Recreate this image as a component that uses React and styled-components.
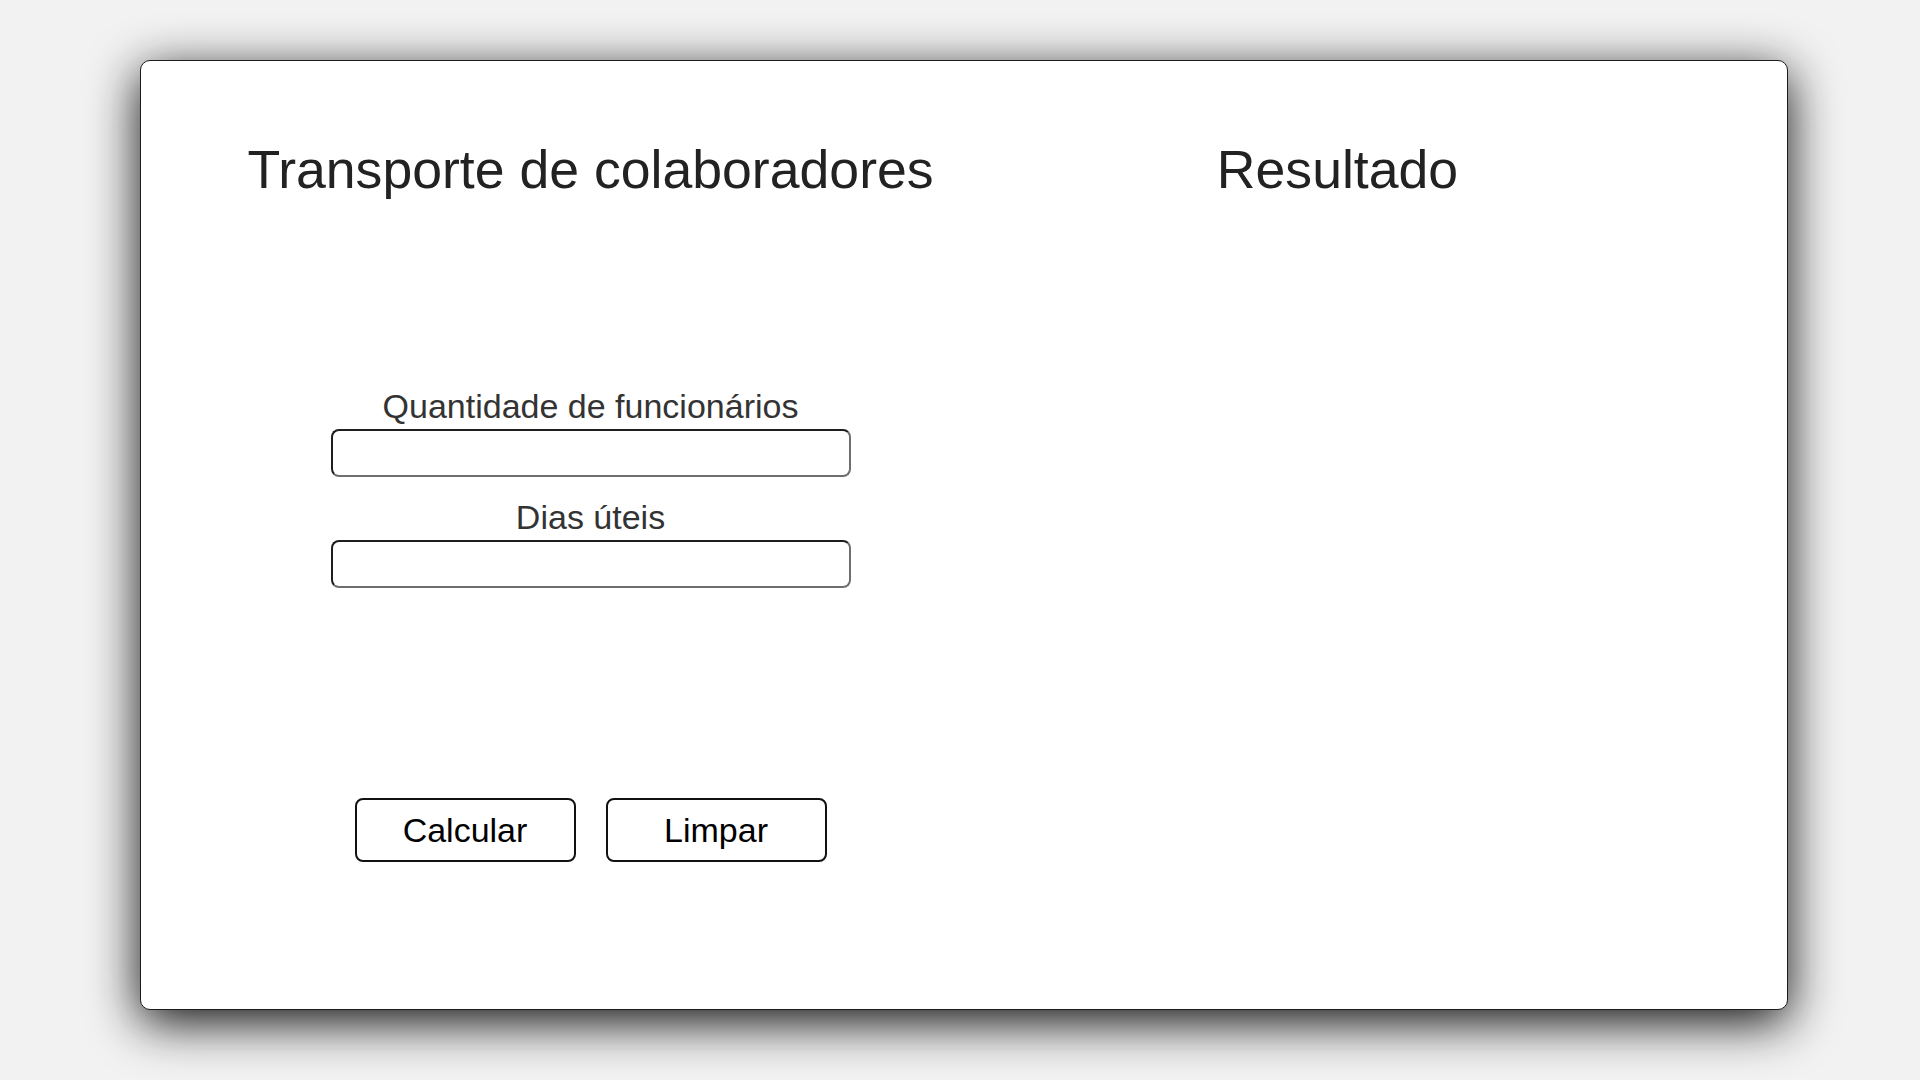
import React from 'react';
import styled, { createGlobalStyle } from 'styled-components';

const GlobalStyle = createGlobalStyle`
  body {
    margin: 0;
    background-color: #f2f2f2;
    font-family: "Liberation Sans", Arial, sans-serif;
  }
`;

const Page = styled.div`
  box-sizing: border-box;
  min-height: 100vh;
  padding: 60px 132px 70px 140px;
`;

const Card = styled.div`
  box-sizing: border-box;
  width: 1648px;
  height: 950px;
  display: grid;
  grid-template-columns: 1fr 1fr;
  padding: 77px 76px 0;
  background-color: #fff;
  border: 1px solid #1c1c1c;
  border-radius: 10px;
  box-shadow: 0 12px 50px rgba(0, 0, 0, 0.95);
`;

const Column = styled.div`
  display: flex;
  flex-direction: column;
  align-items: center;
`;

const Title = styled.h1`
  margin: 0;
  font-size: 53.6px;
  font-weight: 400;
  line-height: 62px;
  color: #222;
`;

const Form = styled.form`
  width: 520px;
  margin-top: 187px;
  display: flex;
  flex-direction: column;
  gap: 21px;
`;

const Field = styled.div`
  display: flex;
  flex-direction: column;
`;

const Label = styled.label`
  font-size: 34px;
  line-height: 39px;
  text-align: center;
  color: #333;
  margin-bottom: 3px;
`;

const Input = styled.input`
  box-sizing: border-box;
  height: 48px;
  padding: 0 10px;
  font-family: inherit;
  font-size: 24px;
  background-color: #fff;
  border: 2px solid;
  border-color: #1e1e1e #6e6e6e #6e6e6e #1e1e1e;
  border-radius: 8px;
  outline: none;
`;

const Actions = styled.div`
  display: flex;
  justify-content: center;
  gap: 30px;
  margin-top: 189px;
`;

const Button = styled.button`
  box-sizing: border-box;
  width: 221px;
  height: 64px;
  font-family: inherit;
  font-size: 34px;
  color: #000;
  background-color: #fff;
  border: 2px solid #111;
  border-radius: 8px;
  cursor: pointer;
`;

export default () => (
  <Page>
    <GlobalStyle />
    <Card>
      <Column>
        <Title>Transporte de colaboradores</Title>
        <Form onSubmit={(e) => e.preventDefault()}>
          <Field>
            <Label htmlFor="qtd">Quantidade de funcionários</Label>
            <Input id="qtd" type="text" />
          </Field>
          <Field>
            <Label htmlFor="dias">Dias úteis</Label>
            <Input id="dias" type="text" />
          </Field>
          <Actions>
            <Button type="button">Calcular</Button>
            <Button type="button">Limpar</Button>
          </Actions>
        </Form>
      </Column>
      <Column>
        <Title>Resultado</Title>
      </Column>
    </Card>
  </Page>
);
